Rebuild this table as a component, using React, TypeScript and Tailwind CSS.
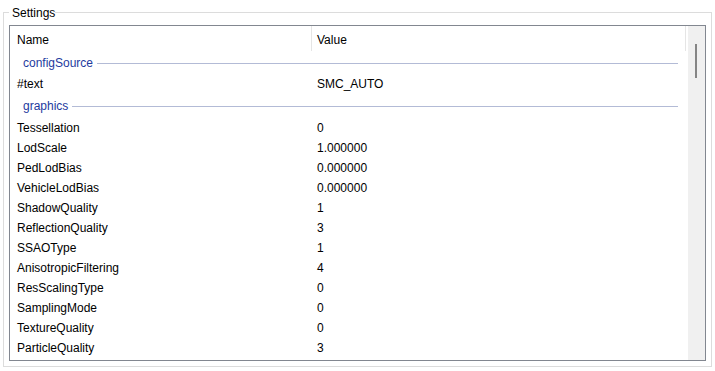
import React from 'react';

type Group = { title: string; height: string; rows: [string, string][] };

const groups: Group[] = [
  { title: 'configSource', height: 'h-[21px] pt-[3px]', rows: [['#text', 'SMC_AUTO']] },
  {
    title: 'graphics',
    height: 'h-[24px] pt-[4px]',
    rows: [
      ['Tessellation', '0'],
      ['LodScale', '1.000000'],
      ['PedLodBias', '0.000000'],
      ['VehicleLodBias', '0.000000'],
      ['ShadowQuality', '1'],
      ['ReflectionQuality', '3'],
      ['SSAOType', '1'],
      ['AnisotropicFiltering', '4'],
      ['ResScalingType', '0'],
      ['SamplingMode', '0'],
      ['TextureQuality', '0'],
      ['ParticleQuality', '3'],
    ],
  },
];

const App = () => {
  return (
    <div className="w-[715px] h-[371px] bg-white pt-[4px] overflow-hidden text-[12px] text-black font-['Liberation_Sans',Arial,sans-serif]">
      <fieldset className="mx-[3px] border border-[#dcdcdc] px-[5px] pt-[4px] pb-[5px]">
        <legend className="pl-[3px] pr-0 pt-[2px] leading-[15px]">Settings</legend>

        {/* List view */}
        <div className="flex h-[336px] border border-[#828790]">
          <div className="flex-1 overflow-hidden">
            {/* Column header */}
            <div className="flex h-[25px]">
              <div className="w-[302px] flex items-center pl-[7px] pt-[2px] border-r border-[#e5e5e5]">Name</div>
              <div className="w-[374px] flex items-center pl-[5px] pt-[2px] border-r border-[#e5e5e5]">Value</div>
            </div>

            {groups.map((g) => (
              <div key={g.title}>
                <div className={`${g.height} flex items-center pl-[13px] mr-[10px]`}>
                  <span className="text-[#1e3a9e]">{g.title}</span>
                  <div className="flex-1 h-px bg-[#b3bbd6] ml-[4px]" />
                </div>
                {g.rows.map(([name, value]) => (
                  <div key={name} className="flex h-[20px] pt-[4px] items-center">
                    <div className="w-[301px] pl-[7px]">{name}</div>
                    <div className="pl-[6px]">{value}</div>
                  </div>
                ))}
              </div>
            ))}
          </div>

          {/* Scrollbar */}
          <div className="w-[17px] bg-[#f0f0f0] pl-[7px] pt-[18px]">
            <div className="w-[2px] h-[34px] bg-[#858585]" />
          </div>
        </div>
      </fieldset>
    </div>
  );
};

export default App;
